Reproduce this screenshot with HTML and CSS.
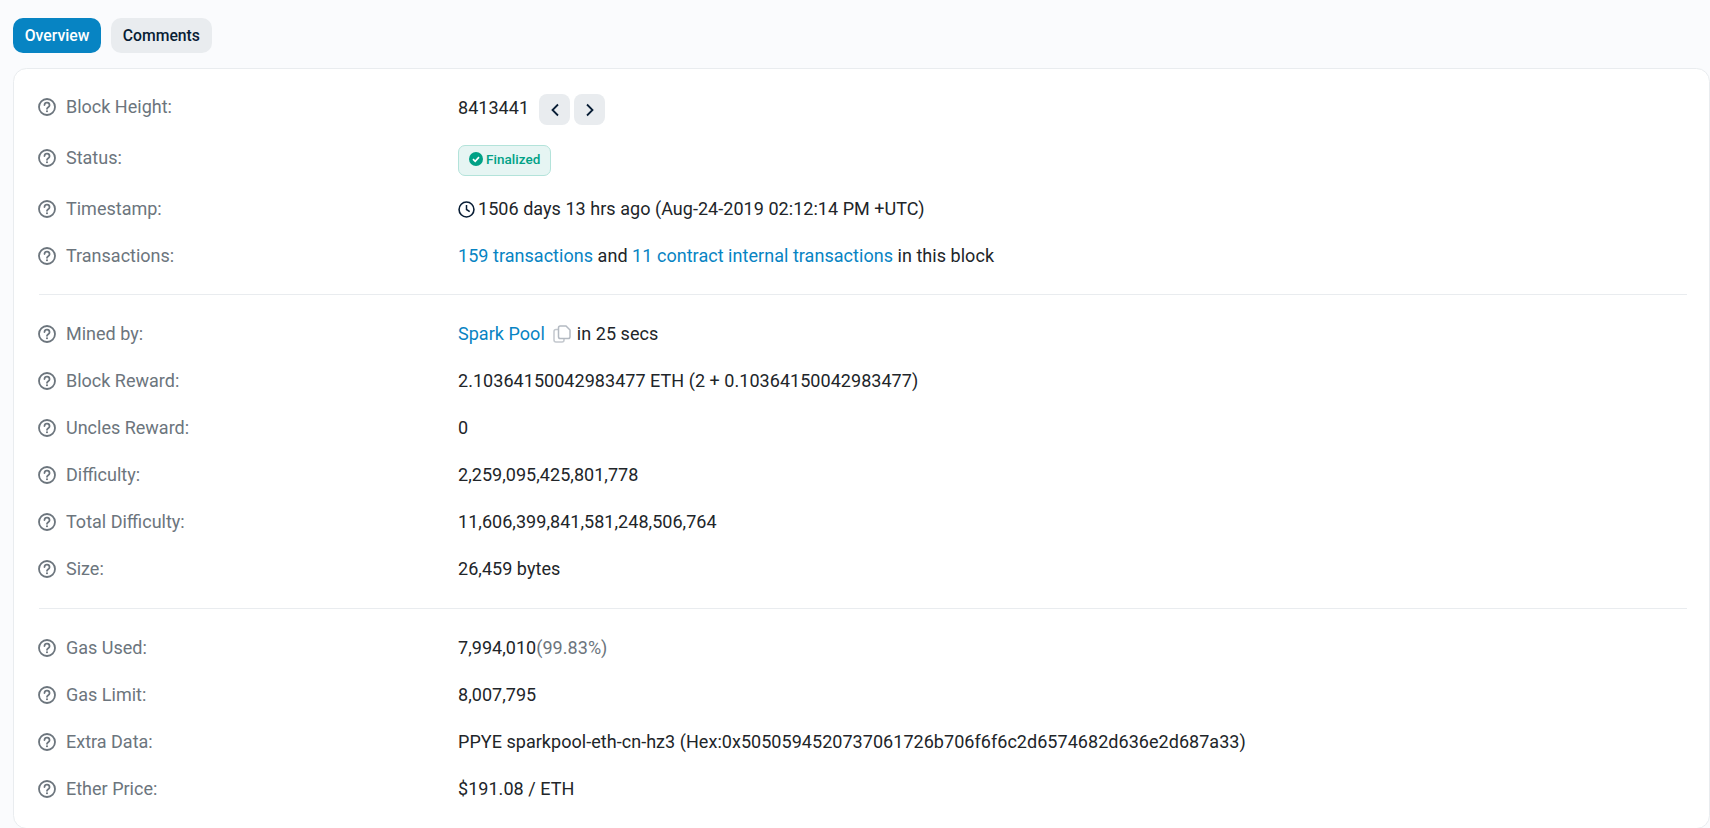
FILE: index.html
```html
<!DOCTYPE html>
<html lang="en">
<head>
<meta charset="utf-8">
<title>Block 8413441</title>
<link rel="stylesheet" href="styles.css">
</head>
<body>
<svg class="defs" width="0" height="0" aria-hidden="true">
  <symbol id="q" viewBox="0 0 18 18">
    <circle cx="9" cy="9" r="8" fill="none" stroke="currentColor" stroke-width="1.8"/>
    <path d="M6.5 7a2.5 2.5 0 0 1 5 .4c0 1.6-2.5 1.9-2.5 3.4" fill="none" stroke="currentColor" stroke-width="1.8" stroke-linecap="round"/>
    <circle cx="9" cy="13.3" r="1.05" fill="currentColor"/>
  </symbol>
</svg>
<nav class="tabs">
  <a class="tab tab-active">Overview</a>
  <a class="tab">Comments</a>
</nav>
<main class="card">
  <section class="group">
    <div class="row row-first"><div class="label"><svg class="help"><use href="#q"/></svg>Block Height:</div>
      <div class="value">8413441<span class="pager"><button class="nav-btn"><svg viewBox="0 0 14 14" class="chev"><path d="M10 1.5 4.5 7 10 12.5"/></svg></button><button class="nav-btn"><svg viewBox="0 0 14 14" class="chev"><path d="M4 1.5 9.5 7 4 12.5"/></svg></button></span></div></div>
    <div class="row row-status"><div class="label"><svg class="help"><use href="#q"/></svg>Status:</div>
      <div class="value"><span class="badge"><svg class="check" viewBox="0 0 14 14"><circle cx="7" cy="7" r="7" fill="#00a186"/><path d="M4 7.2 6.2 9.3 10 5.2" fill="none" stroke="#fff" stroke-width="1.7"/></svg>Finalized</span></div></div>
    <div class="row"><div class="label"><svg class="help"><use href="#q"/></svg>Timestamp:</div>
      <div class="value"><svg class="clock" viewBox="0 0 16 16"><circle cx="8" cy="8" r="7" fill="none" stroke="currentColor" stroke-width="1.5"/><path d="M8 3.8V8l3 1.9" fill="none" stroke="currentColor" stroke-width="1.4"/></svg>1506 days 13 hrs ago (Aug-24-2019 02:12:14 PM +UTC)</div></div>
    <div class="row"><div class="label"><svg class="help"><use href="#q"/></svg>Transactions:</div>
      <div class="value"><a class="link">159 transactions</a> and <a class="link">11 contract internal transactions</a> in this block</div></div>
  </section>
  <hr class="rule">
  <section class="group">
    <div class="row"><div class="label"><svg class="help"><use href="#q"/></svg>Mined by:</div>
      <div class="value"><a class="link">Spark Pool</a><svg class="copy" viewBox="0 0 18 18"><path d="M5.5 4.5H3C1.900 4.500 1 5.400 1 6.500V15c0 1.100.9 2 2 2h6c1.100 0 2-.9 2-2v-1.500" fill="none" stroke="#c3c8ce" stroke-width="1.5"/><path d="M7.300 1h5.700L17 5v6.700c0 1-.8 1.800-1.800 1.800H7.300c-1 0-1.800-.8-1.800-1.800V2.800c0-1 .8-1.800 1.800-1.800z" fill="#fff" stroke="#b4bac2" stroke-width="1.500"/></svg>in 25 secs</div></div>
    <div class="row"><div class="label"><svg class="help"><use href="#q"/></svg>Block Reward:</div><div class="value">2.10364150042983477 ETH (2 + 0.10364150042983477)</div></div>
    <div class="row"><div class="label"><svg class="help"><use href="#q"/></svg>Uncles Reward:</div><div class="value">0</div></div>
    <div class="row"><div class="label"><svg class="help"><use href="#q"/></svg>Difficulty:</div><div class="value">2,259,095,425,801,778</div></div>
    <div class="row"><div class="label"><svg class="help"><use href="#q"/></svg>Total Difficulty:</div><div class="value">11,606,399,841,581,248,506,764</div></div>
    <div class="row"><div class="label"><svg class="help"><use href="#q"/></svg>Size:</div><div class="value">26,459 bytes</div></div>
  </section>
  <hr class="rule rule-lower">
  <section class="group">
    <div class="row"><div class="label"><svg class="help"><use href="#q"/></svg>Gas Used:</div><div class="value">7,994,010<span class="muted">(99.83%)</span></div></div>
    <div class="row"><div class="label"><svg class="help"><use href="#q"/></svg>Gas Limit:</div><div class="value">8,007,795</div></div>
    <div class="row"><div class="label"><svg class="help"><use href="#q"/></svg>Extra Data:</div><div class="value">PPYE sparkpool-eth-cn-hz3 (Hex:0x5050594520737061726b706f6f6c2d6574682d636e2d687a33)</div></div>
    <div class="row"><div class="label"><svg class="help"><use href="#q"/></svg>Ether Price:</div><div class="value">$191.08 / ETH</div></div>
  </section>
</main>
</body>
</html>
```
FILE: styles.css
```css
html, body { margin: 0; height: 100%; overflow: hidden; }
body {
  background: #fafbfd;
  font-family: Roboto, "Liberation Sans", sans-serif;
  font-size: 18px;
  line-height: 27px;
  color: #212529;
  padding: 18px 0 0 13px;
  box-sizing: border-box;
}
.defs { position: absolute; }
.tabs { display: flex; gap: 10px; height: 35px; }
.tab {
  display: flex;
  align-items: center;
  padding: 0 11.7px;
  border-radius: 10px;
  background: #e9ecef;
  font-size: 15.75px;
  font-weight: 500;
  color: #081d35;
}
.tab-active { background: #0784c3; color: #fff; }
.card {
  margin-top: 15px;
  background: #fff;
  border: 1px solid #e9ecef;
  border-radius: 13.5px;
  padding: 24px 23px 0 24px;
  height: 761px;
  box-sizing: border-box;
}
.group { display: flex; flex-direction: column; gap: 20px; }
.row { display: flex; align-items: center; height: 27px; }
.row-first { height: 32px; align-items: flex-start; }
.row-first .value { margin-top: 1px; }
.row-status { height: 30px; align-items: flex-start; }
.row-status .label { margin-top: -1px; }
.label {
  display: flex;
  align-items: center;
  width: 420px;
  flex: none;
  color: #6c757d;
}
.help { width: 18px; height: 18px; margin-right: 10px; color: #6c757d; }
.value { white-space: nowrap; letter-spacing: .04px; }
.pager { display: inline-flex; gap: 4px; margin-left: 10px; vertical-align: middle; }
.nav-btn {
  width: 31px; height: 31px;
  border: 0; padding: 0;
  border-radius: 8px;
  background: #e9ecef;
  display: flex; align-items: center; justify-content: center;
}
.chev { width: 14px; height: 14px; fill: none; stroke: #081d35; stroke-width: 1.8; }
.badge {
  display: flex;
  align-items: center;
  height: 31px;
  box-sizing: border-box;
  padding: 0 10px 3px;
  font-size: 13.5px;
  font-weight: 500;
  color: #00a186;
  background: #e6f5f3;
  border: 1px solid #b3e3da;
  border-radius: 7px;
}
.check { width: 14px; height: 14px; margin-right: 3px; }
.clock { width: 17px; height: 17px; margin-right: 3px; color: #081d35; vertical-align: -3px; }
.link { color: #0784c3; }
.copy { width: 18px; height: 18px; margin: 0 6px 0 8px; vertical-align: -3px; }
.muted { color: #6c757d; }
.rule { border: 0; border-top: 1px solid #e9ecef; margin: 25px -1px 25px 1px; }
.rule-lower { margin-top: 26px; }
```
